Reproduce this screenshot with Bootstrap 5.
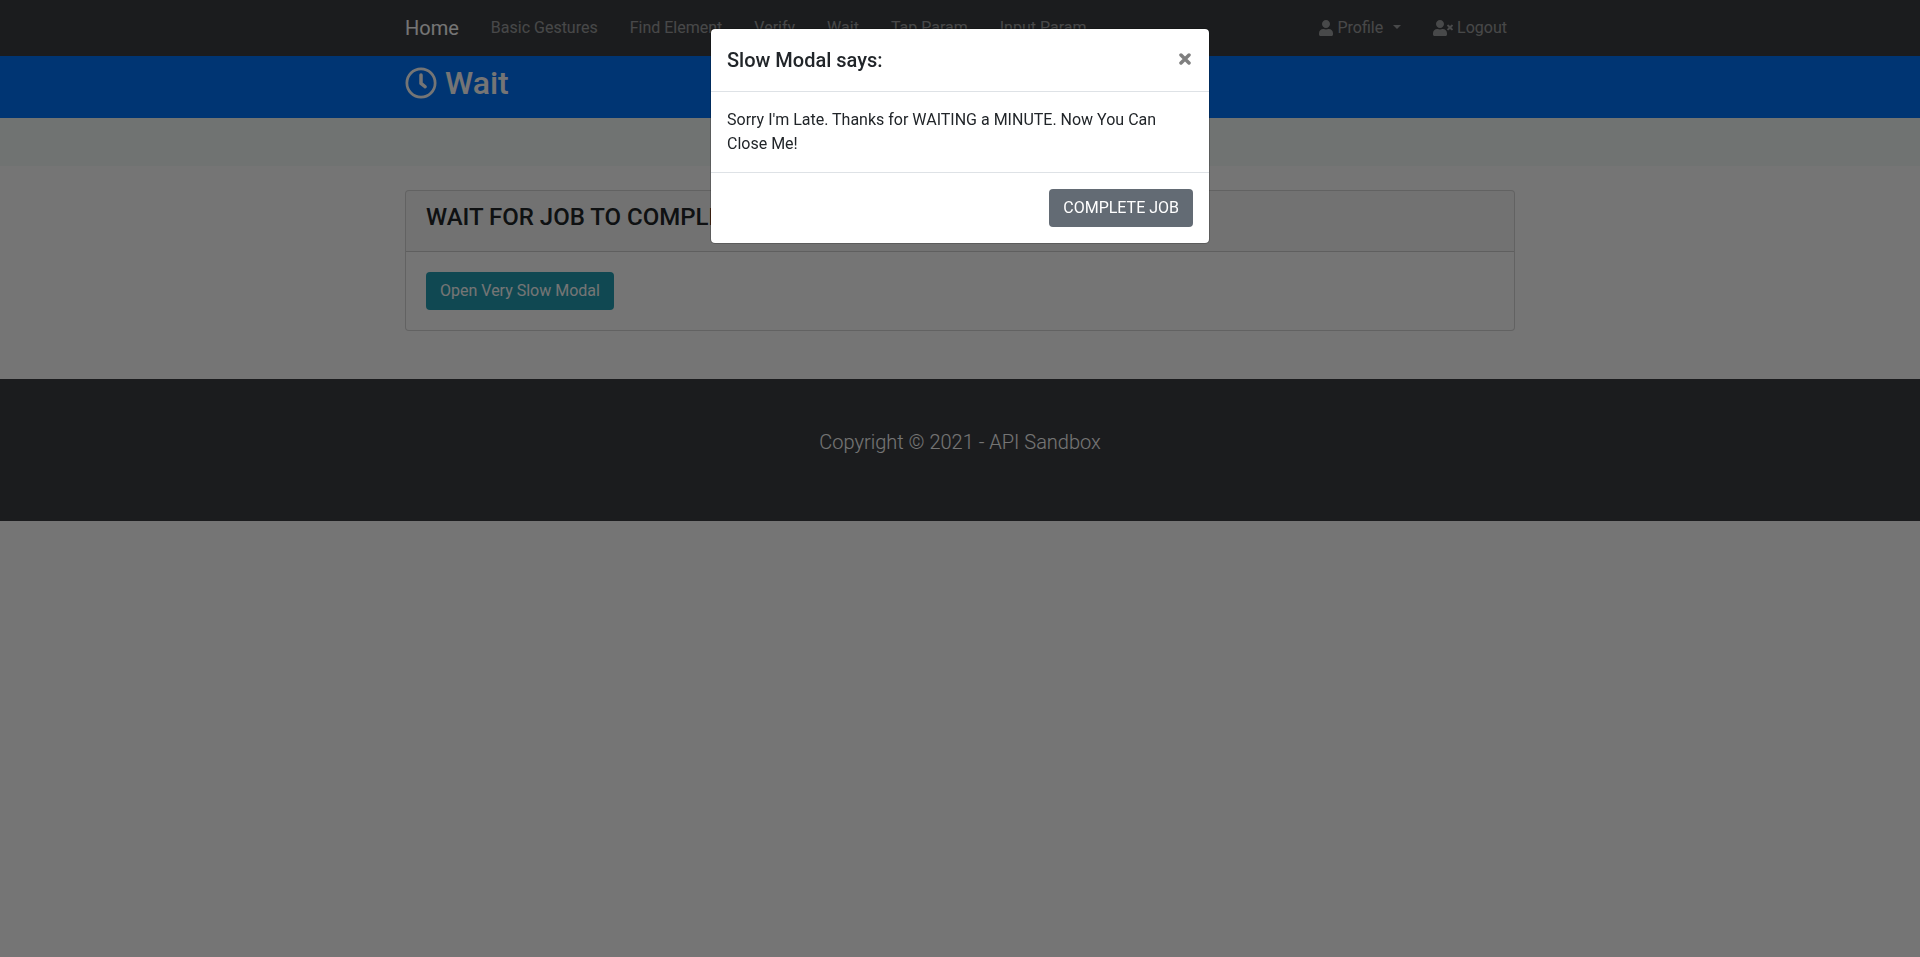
<!DOCTYPE html>
<html lang="en">
<head>
<meta charset="utf-8">
<meta name="viewport" content="width=device-width, initial-scale=1">
<title>Wait - API Sandbox</title>
<link href="https://cdn.jsdelivr.net/npm/bootstrap@5.3.0/dist/css/bootstrap.min.css" rel="stylesheet">
<style>
  body {
    font-family: Roboto, "Liberation Sans", sans-serif;
    color: #212529;
  }
  .page-column { max-width: 1140px; padding-left: 15px; padding-right: 15px; }
  .top-bar { background: #3c3e42; --bs-navbar-color: rgba(255, 255, 255, .5); min-height: 56px; }
  .top-bar .navbar-brand { line-height: 30px; }
  .top-bar .dropdown-toggle::after { margin-left: 6px; }
  .banner { background: #0075fb; }
  .banner h1 { font-size: 32px; line-height: 38px; font-weight: 500; }
  .sub-banner { background: #f4faf8; height: 48px; }
  .job-card { --bs-card-border-radius: 4px; --bs-card-inner-border-radius: 3px; --bs-card-border-color: rgba(0, 0, 0, .16); }
  .job-card .card-header { padding: 12px 20px; }
  .job-card .card-body { padding: 20px; }
  .job-card h2 { font-size: 24px; line-height: 28px; font-weight: 500; }
  .btn { --bs-btn-border-radius: 4px; --bs-btn-padding-x: 13px; }
  .btn-teal, .btn-teal:hover { background: #239eb3; color: #fff; }
  .btn-slate, .btn-slate:hover { background: #636b74; color: #fff; }
  .site-footer { background: #3c3e42; }
  .site-footer p { font-size: 20px; line-height: 30px; font-weight: 300; }
  .modal-backdrop { --bs-backdrop-opacity: .54; }
  .modal { --bs-modal-border-radius: 5px; --bs-modal-inner-border-radius: 4px; --bs-modal-border-color: rgba(0, 0, 0, .2); --bs-modal-header-border-color: #dee2e6; --bs-modal-footer-border-color: #dee2e6; }
  .modal-title { font-size: 20px; line-height: 30px; }
  .close-x { color: #7f7f7f; }
</style>
</head>
<body>
<nav class="navbar navbar-expand-lg navbar-dark top-bar py-2">
  <div class="container page-column">
    <a class="navbar-brand py-1 me-3" href="#">Home</a>
    <ul class="navbar-nav me-auto">
      <li class="nav-item mx-2"><a class="nav-link" href="#">Basic Gestures</a></li>
      <li class="nav-item mx-2"><a class="nav-link" href="#">Find Element</a></li>
      <li class="nav-item mx-2"><a class="nav-link" href="#">Verify</a></li>
      <li class="nav-item mx-2"><a class="nav-link" href="#">Wait</a></li>
      <li class="nav-item mx-2"><a class="nav-link" href="#">Tap Param</a></li>
      <li class="nav-item mx-2"><a class="nav-link" href="#">Input Param</a></li>
    </ul>
    <ul class="navbar-nav gap-3">
      <li class="nav-item">
        <a class="nav-link d-flex align-items-center gap-1" href="#">
          <svg width="14" height="16" viewBox="0 0 448 512" fill="currentColor" aria-hidden="true"><path d="M224 256c70.700 0 128-57.300 128-128S294.700 0 224 0 96 57.300 96 128s57.300 128 128 128zm89.600 32h-16.700c-22.200 10.200-46.900 16-72.900 16s-50.600-5.800-72.900-16h-16.700C60.200 288 0 348.200 0 422.400V464c0 26.500 21.500 48 48 48h352c26.500 0 48-21.500 48-48v-41.600c0-74.200-60.200-134.400-134.400-134.400z"/></svg>
          <span class="dropdown-toggle">Profile&nbsp;</span>
        </a>
      </li>
      <li class="nav-item">
        <a class="nav-link d-flex align-items-center gap-1" href="#">
          <svg width="20" height="16" viewBox="0 0 640 512" fill="currentColor" aria-hidden="true"><path d="M589.600 240l45.600-45.600c6.300-6.300 6.300-16.500 0-22.800l-22.800-22.800c-6.300-6.300-16.500-6.300-22.800 0L544 194.400l-45.600-45.600c-6.300-6.300-16.500-6.300-22.800 0l-22.800 22.800c-6.300 6.300-6.300 16.500 0 22.800l45.600 45.600-45.600 45.600c-6.300 6.300-6.300 16.500 0 22.800l22.800 22.800c6.300 6.300 16.500 6.300 22.800 0l45.600-45.600 45.600 45.600c6.300 6.300 16.500 6.300 22.800 0l22.800-22.800c6.300-6.300 6.300-16.500 0-22.800L589.600 240zM224 256c70.700 0 128-57.300 128-128S294.700 0 224 0 96 57.300 96 128s57.300 128 128 128zm89.600 32h-16.700c-22.200 10.200-46.900 16-72.900 16s-50.600-5.800-72.900-16h-16.700C60.200 288 0 348.200 0 422.400V464c0 26.500 21.500 48 48 48h352c26.500 0 48-21.500 48-48v-41.600c0-74.200-60.200-134.400-134.400-134.400z"/></svg>
          <span>Logout</span>
        </a>
      </li>
    </ul>
  </div>
</nav>

<header class="banner text-white pt-2 pb-3">
  <div class="container page-column">
    <h1 class="d-flex align-items-center gap-2 mb-0">
      <svg width="32" height="32" viewBox="0 0 512 512" fill="none" stroke="currentColor" aria-hidden="true"><circle cx="256" cy="256" r="226" stroke-width="44"/><path d="M256 128v134l66 54" stroke-width="56" stroke-linecap="round" stroke-linejoin="round"/></svg>
      <span>Wait</span>
    </h1>
  </div>
</header>
<div class="sub-banner"></div>

<main class="container page-column pt-4 pb-5">
  <section class="card job-card">
    <div class="card-header"><h2 class="mb-2">WAIT FOR JOB TO COMPLETE</h2></div>
    <div class="card-body"><button type="button" class="btn btn-teal">Open Very Slow Modal</button></div>
  </section>
</main>

<footer class="site-footer text-white text-center py-5">
  <p class="mb-3">Copyright © 2021 - API Sandbox</p>
</footer>

<div class="modal show d-block" tabindex="-1" role="dialog" aria-modal="true" aria-labelledby="slowTitle">
  <div class="modal-dialog">
    <div class="modal-content">
      <div class="modal-header align-items-start">
        <h5 class="modal-title" id="slowTitle">Slow Modal says:</h5>
        <button type="button" class="close-x btn p-0 border-0 d-flex pt-2" aria-label="Close">
          <svg width="16" height="12" viewBox="0 0 16 12" aria-hidden="true"><path d="M4 2l8 8M12 2l-8 8" stroke="currentColor" stroke-width="3.500" stroke-linecap="round"/></svg>
        </button>
      </div>
      <div class="modal-body">Sorry I'm Late. Thanks for WAITING a MINUTE. Now You Can Close Me!</div>
      <div class="modal-footer">
        <button type="button" class="btn btn-slate">COMPLETE JOB</button>
      </div>
    </div>
  </div>
</div>
<div class="modal-backdrop show"></div>
<script src="https://cdn.jsdelivr.net/npm/bootstrap@5.3.0/dist/js/bootstrap.bundle.min.js"></script>
</body>
</html>
